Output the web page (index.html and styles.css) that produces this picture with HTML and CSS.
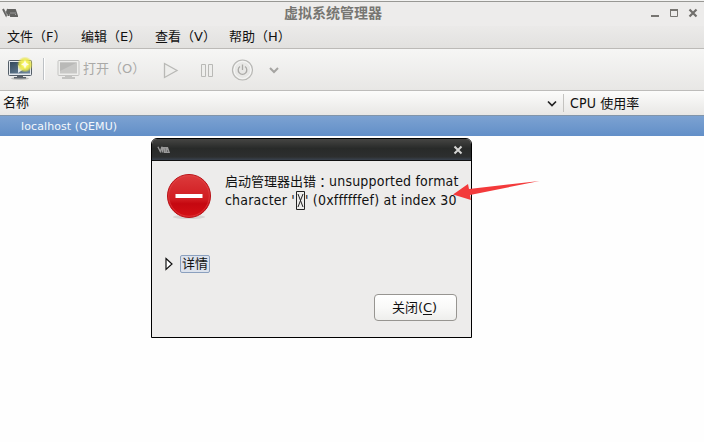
FILE: index.html
```html
<!DOCTYPE html>
<html lang="zh-CN">
<head>
<meta charset="utf-8">
<title>虚拟系统管理器</title>
<link rel="stylesheet" href="styles.css">
</head>
<body>
<div class="window">
  <header class="titlebar">
    <svg class="vm" width="16" height="10" viewBox="0 0 16 10"><path d="M1 1l3 6 2-6M6.500 1v7M8 2h5l2 6H9zM10 2v6M12 2v6" fill="none" stroke="#626260" stroke-width="2"/><path d="M3 3l2 4M8 5h6" stroke="#999"/></svg>
    <h1>虚拟系统管理器</h1>
    <svg class="controls" width="48" height="10" viewBox="0 0 48 10"><path d="M0 8h8" stroke="#777571" stroke-width="2"/><path d="M19.500 2v6.500h7V2" fill="none" stroke="#777571"/><path d="M19 2h8" stroke="#777571" stroke-width="2"/><path d="M38.500 1.500l7 7m0-7l-7 7" stroke="#716f6c" stroke-width="2.200"/></svg>
  </header>
  <nav class="menu"><span>文件（F）</span><span>编辑（E）</span><span>查看（V）</span><span>帮助（H）</span></nav>
  <div class="toolbar">
    <svg class="new" width="26" height="24" viewBox="0 0 26 24">
      <defs><linearGradient id="screen" x2="1" y2="1"><stop stop-color="#344a5c"/><stop offset="1" stop-color="#7189a0"/></linearGradient><radialGradient id="glow"><stop stop-color="#ffffe0"/><stop offset=".38" stop-color="#f8f55c"/><stop offset=".7" stop-color="#ebe84a" stop-opacity=".85"/><stop offset="1" stop-color="#e6df3d" stop-opacity="0"/></radialGradient></defs>
      <ellipse cx="13" cy="21.500" rx="9" ry="1.500" fill="#bdbdba"/>
      <rect x="1.500" y="3.500" width="23" height="15" rx="1" fill="#e5e9ed" stroke="#545e68"/><rect x="3" y="5" width="20" height="11.500" fill="url(#screen)"/><path d="M11 8l6 4-6 4z" fill="#e4e9ec"/><path d="M10 19h6v1h3v1.500H7V20h3z" fill="#596068"/><circle cx="18" cy="7.500" r="8" fill="url(#glow)"/><path d="M18 3l1.300 3L22 7.500l-2.700 1L18 12l-1.300-3.500-2.700-1 2.700-1.500z" fill="#fffde4"/>
    </svg>
    <i class="separator"></i>
    <svg class="open" width="24" height="22" viewBox="0 0 24 22"><rect x="1" y="2.500" width="21" height="15" rx="1" fill="#eeeeec" stroke="#c4c4c2"/><path d="M3 4.500h17v11H3z" fill="#c8c8c6"/><path d="M3 4.500h17L3 13z" fill="#b9b9b7"/><path d="M8 18h7v1h3v2H5v-2h3z" fill="#c3c3c1"/></svg>
    <span class="open-label">打开（O）</span>
    <svg class="tools" width="120" height="26" viewBox="0 0 120 26"><path d="M2.500 7.500l12.500 7-12.500 7z" fill="#eeeeec" stroke="#b9b9b6" stroke-width="1.300"/><path d="M39.500 8.500h4v12h-4zm7 0h4v12h-4z" fill="#eeeeec" stroke="#b9b9b6"/><circle cx="80.500" cy="14" r="10" fill="#e8e8e6" stroke="#b7b7b4" stroke-width="1.200"/><circle cx="80.500" cy="14" r="8.500" fill="none" stroke="#f8f8f7"/><path d="M78 10.500a4.300 4.300 0 1 0 5 0M80.500 8.500v5.500" fill="none" stroke="#aaa9a6" stroke-width="1.300"/><path d="M108 12l4 4 4-4" fill="none" stroke="#a5a4a1" stroke-width="2"/></svg>
  </div>
  <div class="columns"><div class="name">名称<svg width="10" height="7" viewBox="0 0 10 7"><path d="M1 1.500l4 4 4-4" fill="none" stroke="#222" stroke-width="1.700"/></svg></div><div class="cpu"><b>CPU</b> 使用率</div></div>
  <div class="row">localhost (QEMU)</div>
</div>
<section class="dialog">
  <header class="dialog-title"><svg class="vm" width="15" height="8" viewBox="0 0 16 10"><path d="M1 1l3 6 2-6M6.500 1v7M8 2h5l2 6H9zM10 2v6M12 2v6" fill="none" stroke="#999" stroke-width="1.700"/></svg><svg width="10" height="10" viewBox="0 0 10 10"><path d="M1.500 1.500l7 7m0-7l-7 7" stroke="#d5d5d3" stroke-width="2"/></svg></header>
  <div class="message">
    <svg width="46" height="47" viewBox="0 0 46 47"><defs><linearGradient id="red" x2="0" y2="1"><stop stop-color="#dc3b3c"/><stop offset=".58" stop-color="#d01b20"/><stop offset=".68" stop-color="#c50810"/><stop offset="1" stop-color="#d51015"/></linearGradient></defs><ellipse cx="23" cy="44" rx="16" ry="2" fill="#d7d5d3"/><circle cx="23" cy="23" r="21.500" fill="url(#red)" stroke="#b91217"/><circle cx="23" cy="23" r="20.300" fill="none" stroke="#e7494b" stroke-opacity=".6"/><path d="M9.500 21h27v4h-27z" fill="#fff"/></svg>
    <p><span class="line">启动管理器出错<span class="colon" lang="zh-TW">：</span><span class="first-latin">unsupported format</span></span><span class="line latin">character '<svg class="missing" width="10" height="19" viewBox="0 0 10 19"><path d="M1.500.5h8v18h-8zM3 3l5 13M8 3L3 16" fill="none" stroke="#222"/></svg>' (0xffffffef) at index 30</span></p>
  </div>
  <div class="details"><svg width="8" height="14" viewBox="0 0 8 14"><path d="M1 1.500l6 5.500-6 5.500z" fill="#fff" stroke="#111" stroke-width="1.200"/></svg><span>详情</span></div>
  <div class="actions"><button>关闭(<u>C</u>)</button></div>
</section>
<svg class="arrow" width="90" height="24" viewBox="0 0 90 24"><path d="M1 14.500L16 4l1 5 70.500-8L18 15l1 5z" fill="#f33a3b"/></svg>
</body>
</html>
```
FILE: styles.css
```css
* { box-sizing: border-box; }
body { margin: 0; width: 704px; height: 442px; overflow: hidden; background: #fefefe; color: #111; font: 13px/18px "DejaVu Sans", "Noto Sans CJK SC", sans-serif; }
svg { display: block; flex: none; }
.window { padding-top: 1px; background: #f3f3f2; }
.titlebar { display: flex; align-items: center; height: 25px; padding: 0 5px 2px 2px; border-top: 1px solid #989894; background: #edeceb; }
.titlebar h1 { flex: 1; margin: 0 0 2px -3px; text-align: center; font: bold 14px/20px "Noto Sans CJK SC", sans-serif; color: #777672; }
.menu { display: flex; height: 23px; padding-left: 7px; line-height: 21px; border-bottom: 1px solid #bcbab7; background: linear-gradient(#ebeae9, #e2e1df); white-space: nowrap; }
.menu span { width: 74px; flex: none; }
.toolbar { display: flex; align-items: center; height: 42px; padding: 0 7px 1px; border-bottom: 1px solid #bdbcba; background: linear-gradient(#f6f6f5, #e8e7e5); }
.separator { width: 2px; height: 22px; margin: 0 12px 0 10px; border-left: 1px solid #bdc1c5; border-right: 1px solid #fff; }
.open-label { width: 67px; margin-left: 2px; flex: none; color: #aaa9a7; white-space: nowrap; }
.tools { margin-left: 12px; }
.columns { display: flex; height: 24px; background: linear-gradient(#fcfcfb, #e8e7e5); line-height: 24px; }
.name { display: flex; align-items: center; justify-content: space-between; width: 563px; padding: 0 6px 0 3px; }
.cpu { flex: 1; margin: 3px 0; padding-left: 6px; border-left: 1px solid #c4c3c0; line-height: 18px; }
.cpu b { font-family: "DejaVu Sans Condensed", "DejaVu Sans", sans-serif; font-weight: normal; font-size: 14px; letter-spacing: .2px; }
.row { height: 21px; padding-left: 21px; border-top: 1px solid #8195aa; background: linear-gradient(#7ca2d2, #628fc8); color: #f4f8fc; font-size: 11px; letter-spacing: .1px; line-height: 21px; }
.dialog { position: absolute; left: 151px; top: 138px; width: 321px; height: 200px; border: 1px solid #000; border-radius: 6px 6px 0 0; background: #edeceb; overflow: hidden; }
.dialog-title { display: flex; align-items: center; justify-content: space-between; height: 22px; padding: 0 8px 0 4px; border-bottom: 1px solid #111; background: linear-gradient(#454543, #282a29 45%, #2d2f2f 85%, #39424e); }
.message { display: flex; height: 92px; padding: 12px 0 0 14px; }
.message p { margin: -1px 0 0 13px; }
.line { display: flex; height: 19px; align-items: center; line-height: 19px; white-space: nowrap; }
.colon { width: 13px; text-align: center; font-family: "Noto Sans CJK TC", sans-serif; }
.latin, .first-latin { font-family: "DejaVu Sans Condensed", "DejaVu Sans", sans-serif; font-size: 14px; letter-spacing: .2px; white-space: pre; }
.details { display: flex; align-items: center; height: 21px; padding-left: 13px; }
.details span { width: 30px; height: 18px; margin-left: 7px; padding-left: 1px; border: 1px solid #8ba0be; border-radius: 2px; background: #dce2ec; line-height: 16px; }
.actions { display: flex; justify-content: flex-end; padding: 20px 14px 0 0; }
.actions button { width: 83px; height: 27px; padding: 0 2px 0 0; border: 1px solid #979591; border-radius: 4px; background: linear-gradient(#fff, #f9f9f8 50%, #eeeeec); color: #111; font: inherit; }
.actions u { text-underline-offset: 2px; }
.arrow { position: absolute; left: 452px; top: 180px; }
```
